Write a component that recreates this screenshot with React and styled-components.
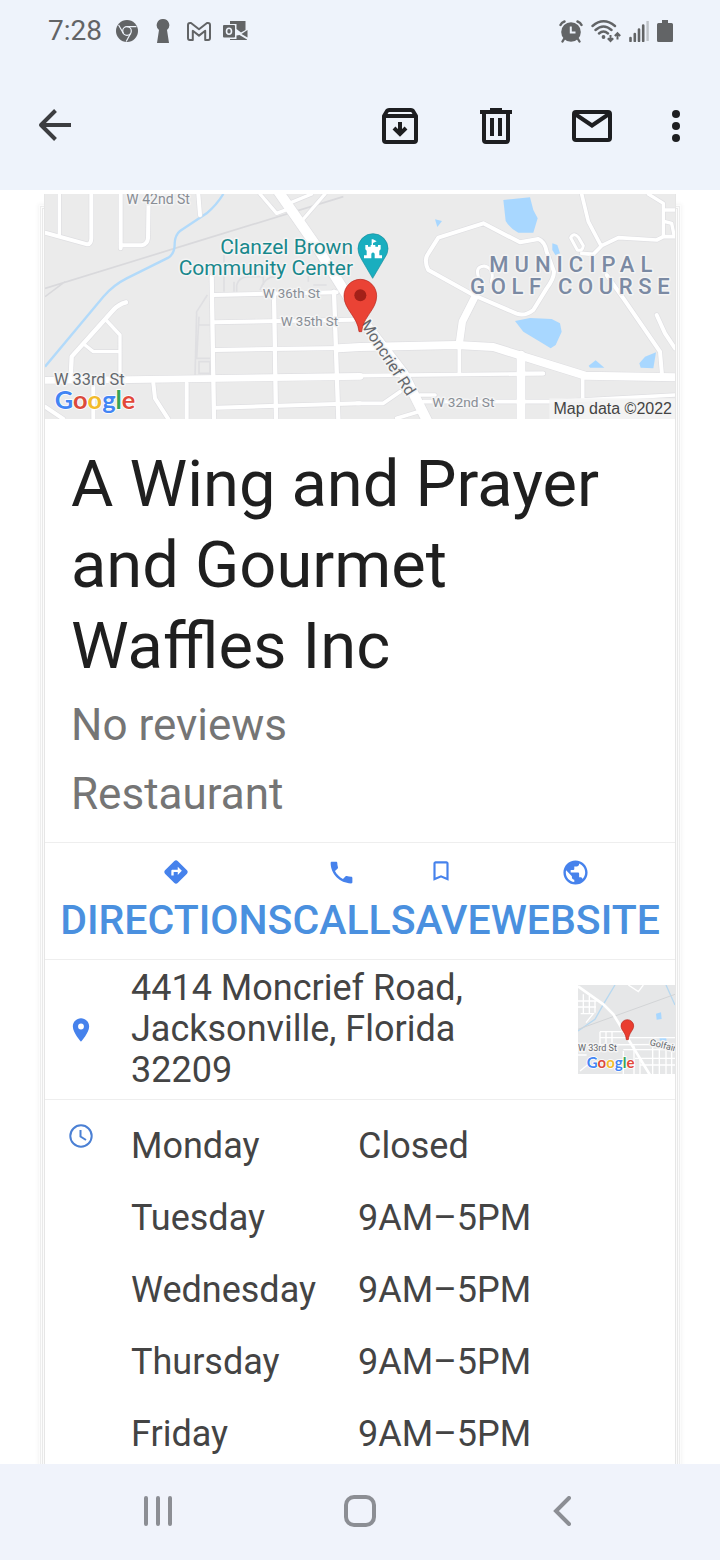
import React from "react";
import styled, { createGlobalStyle } from "styled-components";
import { MdDirections, MdPhone, MdBookmarkBorder, MdPublic, MdPlace } from "react-icons/md";

const GlobalStyle = createGlobalStyle`
  * { box-sizing: border-box; }
  body { margin: 0; background: #fff; font-family: Roboto, "Liberation Sans", sans-serif; }
`;

const Screen = styled.div`
  display: flex;
  flex-direction: column;
  height: 100vh;
  overflow: hidden;
`;

const TopArea = styled.header`
  flex: none;
  background: #eef3fb;
`;

const StatusBar = styled.div`
  display: flex;
  align-items: center;
  justify-content: space-between;
  height: 62px;
  padding: 0 47px 0 48px;
  color: #626466;
`;

const StatusGroup = styled.div`
  display: flex;
  align-items: center;
  gap: ${(p) => p.$gap || 0}px;
  svg { display: block; }
`;

const Clock = styled.time`
  width: 61px;
  font-size: 28px;
  line-height: 32px;
`;

const StatusSlot = styled.span`
  display: flex;
  justify-content: center;
  width: 36px;
`;

const Toolbar = styled.nav`
  display: flex;
  align-items: center;
  height: 128px;
  padding: 0 8px 0 6px;
`;

const Spacer = styled.div`
  flex: 1;
`;

const IconButton = styled.button`
  display: flex;
  align-items: center;
  justify-content: center;
  width: ${(p) => p.$width || 96}px;
  height: 96px;
  padding: 0;
  border: 0;
  background: none;
  color: #1d1e21;
`;

const Content = styled.main`
  flex: 1;
  min-height: 0;
  overflow: hidden;
  padding: 4px 44px 0;
`;

const Card = styled.article`
  min-height: 100%;
  border: solid #e6e6e6;
  border-width: 0 1px;
  background: #fff;
  box-shadow: 0 16px 0 1px #fcfcfc, 0 16px 0 2px #e9e9e9, 0 16px 0 3px #fcfcfc,
    0 16px 0 4px #ededed, 0 16px 0 5px #fcfcfc, 0 16px 4px 6px #f4f4f4;
`;

const MapLink = styled.a`
  display: block;
  svg { display: block; width: 100%; height: auto; }
`;

const Summary = styled.section`
  padding: 25px 26px 13px;
  border-bottom: 1px solid #eee;
`;

const Title = styled.h1`
  margin: 0 0 4px;
  font-size: 65px;
  line-height: 81px;
  font-weight: 400;
  color: #1f1f1f;
`;

const Meta = styled.p`
  margin: 0;
  font-size: 44px;
  line-height: 69px;
  color: #757575;
`;

const Actions = styled.section`
  display: flex;
  justify-content: center;
  padding: 15px 0;
  border-bottom: 1px solid #eee;
`;

const Action = styled.a`
  display: flex;
  flex-direction: column;
  align-items: center;
  gap: 10px;
  padding: 0;
  border: 0;
  background: none;
  color: #4a90df;
  font-family: inherit;
  font-size: 41px;
  line-height: 48px;
  font-weight: 500;
  text-decoration: none;
`;

const ActionIcon = styled.span`
  display: flex;
  justify-content: center;
  align-items: flex-start;
  height: 28px;
  color: #4682ec;
`;

const InfoRow = styled.section`
  display: flex;
  align-items: ${(p) => (p.$top ? "flex-start" : "center")};
  padding: 8px 0;
  border-bottom: ${(p) => (p.$last ? "0" : "1px solid #eee")};
`;

const InfoIcon = styled.span`
  flex: none;
  display: flex;
  justify-content: center;
  width: 72px;
  margin-right: 14px;
  padding-top: ${(p) => p.$offset || 0}px;
  color: #4682ec;
`;

const Address = styled.address`
  flex: 1;
  padding-right: 72px;
  font-style: normal;
  font-size: 36px;
  line-height: 41px;
  color: #444;
`;

const Thumb = styled.a`
  flex: none;
  width: 97px;
  svg { display: block; width: 100%; height: auto; }
`;

const Hours = styled.table`
  margin-top: 2px;
  border-collapse: collapse;
  font-size: 36px;
  line-height: 72px;
  color: #444;
  th, td { padding: 0; font-weight: 400; text-align: left; white-space: nowrap; }
  th { width: 227px; }
`;

const SystemNav = styled.nav`
  flex: none;
  display: flex;
  justify-content: center;
  height: 96px;
  padding-bottom: 2px;
  background: #f0f3fb;
`;

const SystemButton = styled.button`
  display: flex;
  align-items: center;
  justify-content: center;
  width: 28%;
  padding: 0;
  border: 0;
  background: none;
  color: #8c8e94;
`;

const Halo = styled.text`
  font-family: Roboto, sans-serif;
  font-size: ${(p) => p.$size}px;
  font-weight: ${(p) => p.$weight || 400};
  letter-spacing: ${(p) => p.$tracking || 0}px;
  fill: ${(p) => p.$color};
  stroke: #f4f4f4;
  stroke-width: 9px;
  stroke-linejoin: round;
  paint-order: stroke;
`;

const Wordmark = styled.text`
  font-family: Lato, sans-serif;
  font-size: ${(p) => p.$size}px;
  font-weight: 700;
  stroke: #fff;
  stroke-width: 5px;
  paint-order: stroke;
`;

const Credit = styled.text`
  font-family: "Liberation Sans", sans-serif;
  font-size: 48px;
  fill: #444;
`;

function GoogleMark({ x, y, size }) {
  return (
    <Wordmark x={x} y={y} $size={size}>
      <tspan fill="#4285f4">G</tspan>
      <tspan fill="#db4a3c">o</tspan>
      <tspan fill="#f2bb2b">o</tspan>
      <tspan fill="#4285f4">g</tspan>
      <tspan fill="#35a455">l</tspan>
      <tspan fill="#e2483a">e</tspan>
    </Wordmark>
  );
}

const roads = [
  [10, "M88 27V150"],
  [12, "M45 143L172 178Q183 178 184 160V27"],
  [12, "M272 27V190M272 181H335Q352 178 354 160L356 27"],
  [12, "M505 27L510 90"],
  [13, "M288 352Q265 358 250 375L125 515L122 580"],
  [10, "M228 405L270 450V570M165 480L190 500H268"],
  [12, "M370 595L375 640L415 702M470 595V702M190 600V702M45 665L100 702"],
  [20, "M45 586L300 584L990 574"],
  [12, "M550 330L920 322M550 412L970 404M555 495L990 488M560 668L990 655"],
  [13, "M545 275L552 702M732 320L738 702M912 320L925 702"],
  [10, "M690 27L740 85L780 70M885 27L815 108M785 52L845 27"],
  [30, "M742 15L860 185L935 305L1000 410L1120 565L1195 715"],
  [12, "M1330 330L1195 255Q1180 225 1195 205L1225 158L1360 115L1470 172L1525 162Q1545 170 1550 200L1572 260Q1572 280 1550 310L1510 375Q1485 395 1460 386Z"],
  [22, "M1335 335L1297 410L1288 475"],
  [11, "M1288 480V565M1472 565H1540"],
  [9, "M1345 275Q1335 245 1362 243Q1395 250 1384 290"],
  [11, "M1655 27L1675 110L1712 180M1935 155L1900 155L1880 165L1765 158L1715 182L1690 208L1655 205"],
  [9, "M1622 158Q1632 140 1646 158L1660 182Q1658 200 1642 195Z"],
  [10, "M1855 27L1900 55V155M1900 75H1935M1905 110L1925 115L1932 150"],
  [12, "M1730 270L1780 340L1890 500L1896 570M1880 390L1905 445L1935 490"],
  [11, "M980 572L1540 566M1658 580V640M980 655H1060L1110 620M1100 700L1165 680M1170 630H1215M1180 650H1570L1750 640L1935 630"],
  [24, "M925 490L990 486L1280 480L1390 486L1530 530L1665 572L1935 577"],
  [26, "M1473 510V715"],
];

function AreaMap() {
  return (
    <svg viewBox="45 27 1890 675" role="img" aria-label="Map of the area around 4414 Moncrief Road">
      <rect x="45" y="27" width="1890" height="675" fill="#ebebeb" />
      <path d="M45 310L500 170L940 35M45 335L105 290" fill="none" stroke="#d9d9dc" strokeWidth="5" />
      <path
        d="M532 330L500 380L495 575M507 395L500 520H540M505 420H540M507 530H540V565H507ZM582 190V320M612 290V320M620 320V300Q625 280 650 275H700V300M690 315Q705 275 735 275H760M835 240V290M850 300H890"
        fill="none" stroke="#dfdfe2" strokeWidth="5" />
      <path
        d="M45 545L220 335Q250 300 290 280L415 218Q435 205 434 175Q435 150 450 138L530 85Q560 60 580 27"
        fill="none" stroke="#b2dafa" strokeWidth="7" />
      <g fill="#a8d7ff">
        <path d="M1420 45L1500 37L1510 75L1523 100L1510 143H1465Q1440 130 1427 108Z" />
        <path d="M1215 103L1236 108L1222 126Z" />
        <path d="M1567 175L1582 180L1590 205L1576 210L1567 195Z" />
        <path d="M1455 408L1500 399L1565 402L1590 415L1595 440L1577 480L1562 490L1530 470L1480 440Z" />
        <path d="M1676 542L1697 526L1723 548H1680Z" />
        <path d="M1828 535L1845 515L1878 502L1870 550L1832 548Z" />
      </g>
      <g fill="none" stroke="#dfdfe2" strokeLinecap="round" strokeLinejoin="round">
        {roads.map(([w, d]) => <path key={d} d={d} strokeWidth={w + 4} />)}
      </g>
      <g fill="none" stroke="#fff" strokeLinecap="round" strokeLinejoin="round">
        {roads.map(([w, d]) => <path key={d} d={d} strokeWidth={w} />)}
      </g>
      <Halo x="289" y="57" $size={42} $color="#888d94">W 42nd St</Halo>
      <Halo x="969" y="206" textAnchor="end" $size={63} $color="#19888c">Clanzel Brown</Halo>
      <Halo x="969" y="269" textAnchor="end" $size={63} $color="#19888c">Community Center</Halo>
      <Halo x="698" y="340" $size={40} $color="#888d94">W 36th St</Halo>
      <Halo x="752" y="422" $size={40} $color="#888d94">W 35th St</Halo>
      <Halo x="72" y="600" $size={49} $color="#64686d">W 33rd St</Halo>
      <Halo x="1207" y="665" $size={41} $color="#888d94">W 32nd St</Halo>
      <Halo x="1378" y="262" $size={66} $weight={500} $tracking={18} $color="#7b8aa3">MUNICIPAL</Halo>
      <Halo x="1320" y="328" $size={66} $weight={500} $tracking={17} $color="#7b8aa3">GOLF COURSE</Halo>
      <Halo x="0" y="0" transform="translate(990 418) rotate(57)" $size={48} $color="#64686d">Moncrief Rd</Halo>
      <path d="M1028 280L994 222Q984 206 984 191A44 44 0 0 1 1074 191Q1074 206 1062 222Z" fill="#19aebf" stroke="#168c9b" strokeWidth="2" />
      <path d="M1006 180H1014V185H1022V180H1025V163H1029L1040 169L1029 174V180H1036V185H1044V180H1052V193L1048 197V211H1056V220H1034V206Q1029 199 1024 206V220H1002V211H1010V197L1006 193Z" fill="#fff" />
      <path d="M987 440C983 395 942 374 942 333A49 50 0 0 1 1040 333C1040 374 999 395 995 440Z" fill="#ea4335" stroke="#b5251c" strokeWidth="2" />
      <circle cx="991" cy="331" r="18" fill="#a32018" />
      <GoogleMark x={74} y={672} size={76} />
      <rect x="1558" y="640" width="377" height="62" fill="#f5f5f5" fillOpacity="0.85" />
      <Credit x="1926" y="687" textAnchor="end">Map data ©2022</Credit>
    </svg>
  );
}

function ThumbMap() {
  return (
    <svg viewBox="54 42 291 267" role="img" aria-label="Small map of the address">
      <rect x="54" y="42" width="291" height="267" fill="#e6e7e8" />
      <path d="M54 180L105 145L130 100L165 42M318 42L345 102" fill="none" stroke="#b7d8f0" strokeWidth="4" />
      <path d="M54 175L345 70" fill="none" stroke="#d2d4d6" strokeWidth="3" />
      <path d="M288 128L303 124L305 144L290 146ZM298 200L318 198L320 210L300 209Z" fill="#a8d7ff" />
      <g fill="none" stroke="#fff">
        <path d="M54 46L130 100L160 130L202 200L270 312" strokeWidth="8" />
        <path d="M120 182H185M120 200H345M54 222L345 220M190 236H345M54 252H80M225 262H345M240 282H345M60 300L85 280M120 182V220M138 182V220M156 182V220M278 200V309M298 220V309M318 220V309M335 220V309M222 220V309M190 240V309M240 260V309M54 90H110M54 108H108M62 128H100L78 155M70 70V130M88 75V130M105 90V125M205 42L235 62L250 42" strokeWidth="4" />
      </g>
      <Halo x="54" y="241" $size={27} $color="#64686d">W 33rd St</Halo>
      <Halo x="0" y="0" transform="translate(268 222) rotate(14)" $size={27} $color="#64686d">Golfair</Halo>
      <path d="M199 206C197 184 183 178 183 165A19 19 0 0 1 221 165C221 178 207 184 205 206Z" fill="#ea3d2f" stroke="#b5251c" strokeWidth="2" />
      <GoogleMark x={80} y={290} size={45} />
    </svg>
  );
}

const ChromeIcon = () => (
  <svg width="22" height="22" viewBox="0 0 22 22">
    <circle cx="11" cy="11" r="11" fill="currentColor" />
    <g fill="none" stroke="#eef3fb" strokeWidth="1.2">
      <circle cx="11" cy="11" r="4.3" />
      <path d="M11 6.7H20.4M7.3 13.2L2.6 5M14.7 13.2L10.2 21.5" />
    </g>
  </svg>
);

const KeyholeIcon = () => (
  <svg width="14" height="24" viewBox="0 0 14 24">
    <path d="M7 0a6.200 6.200 0 0 1 4 11L13 24H1L3 11A6.200 6.200 0 0 1 7 0Z" fill="currentColor" />
  </svg>
);

const GmailIcon = () => (
  <svg width="24" height="19" viewBox="0 0 24 19">
    <path d="M1 16V3Q1 1 3 1H4L12 7.200 20 1H21Q23 1 23 3V16Q23 18 21.200 18H18.200V8.800L12 13.600 5.800 8.800V18H2.800Q1 18 1 16Z" fill="none" stroke="currentColor" strokeWidth="2" strokeLinejoin="round" />
  </svg>
);

const OutlookIcon = () => (
  <svg width="25" height="20" viewBox="0 0 25 20">
    <path d="M7 0H22.500V9L18 11.500 13.500 8V3H7ZM24.500 9V16.500L18.500 13ZM7 18H13.500V14.500L16.500 14 24 18.500V19H7Z" fill="currentColor" />
    <rect x="0" y="4" width="12" height="12.500" rx="1" fill="currentColor" />
    <ellipse cx="6" cy="10.300" rx="2.500" ry="3" fill="none" stroke="#eef3fb" strokeWidth="1.600" />
  </svg>
);

const AlarmIcon = () => (
  <svg width="24" height="23" viewBox="0 0 24 23">
    <circle cx="12" cy="12" r="9.800" fill="currentColor" />
    <path d="M1.500 5Q2.500 2.500 5.500 1.500M22.500 5Q21.500 2.500 18.500 1.500M5 19L3.500 21.500M19 19L20.500 21.500" fill="none" stroke="currentColor" strokeWidth="2.400" strokeLinecap="round" />
    <path d="M11.800 6.500V12.500H16.500" fill="none" stroke="#eef3fb" strokeWidth="2" />
  </svg>
);

const WifiIcon = () => (
  <svg width="30" height="23" viewBox="0 0 30 23">
    <g fill="none" stroke="currentColor" strokeWidth="2.400" strokeLinecap="round">
      <path d="M1.500 6Q12.500-3.500 24 6M4.500 10Q12.500 3 20.500 10M8 13.500Q12.500 9.500 17 13.500" />
    </g>
    <circle cx="12.500" cy="17" r="1.900" fill="currentColor" />
    <path d="M19.500 15V21M16.800 18.200L19.500 21 22.200 18.200M26.500 19.500V13.500M23.800 16L26.500 13.200 29.200 16" fill="none" stroke="currentColor" strokeWidth="2" />
  </svg>
);

const SignalIcon = () => (
  <svg width="20" height="22" viewBox="0 0 20 22">
    <path d="M1.500 18V21M5.800 14V21M10 9.500V21M14.200 5.500V21" stroke="currentColor" strokeWidth="2.600" strokeLinecap="round" />
    <path d="M18.600 1V21" stroke="#bfc3c9" strokeWidth="2.400" />
  </svg>
);

const BatteryIcon = () => (
  <svg width="16" height="22" viewBox="0 0 16 22">
    <path d="M5 0H11V3H14.500Q16 3 16 4.500V20.500Q16 22 14.500 22H1.500Q0 22 0 20.500V4.500Q0 3 1.500 3H5Z" fill="currentColor" />
  </svg>
);

const BackArrow = () => (
  <svg width="34" height="34" viewBox="0 0 34 34" fill="none" stroke="#3c3d40" strokeWidth="4">
    <path d="M34 16H4M18.500 1.500L4 16 18.500 30.500" strokeLinejoin="round" />
  </svg>
);

const ArchiveIcon = () => (
  <svg width="36" height="36" viewBox="0 0 36 36" fill="none" stroke="currentColor" strokeWidth="4">
    <path d="M2 8L5 3Q5.700 2 7 2H29Q30.300 2 31 3L34 8V32Q34 34 32 34H4Q2 34 2 32ZM2 8H34" strokeLinejoin="round" />
    <path d="M18 14V26M12 20L18 26 24 20" />
  </svg>
);

const TrashIcon = () => (
  <svg width="32" height="36" viewBox="0 0 32 36" fill="none" stroke="currentColor" strokeWidth="4">
    <path d="M0 4H32M10 2H22M4 4V32Q4 34 6 34H26Q28 34 28 32V4M12 10V28M20 10V28" />
  </svg>
);

const MailIcon = () => (
  <svg width="40" height="32" viewBox="0 0 40 32" fill="none" stroke="currentColor" strokeWidth="4">
    <rect x="2" y="2" width="36" height="28" rx="2" />
    <path d="M3 4L20 15.500 37 4" />
  </svg>
);

const MoreIcon = () => (
  <svg width="8" height="32" viewBox="0 0 8 32" fill="currentColor">
    <circle cx="4" cy="4" r="4" />
    <circle cx="4" cy="16" r="4" />
    <circle cx="4" cy="28" r="4" />
  </svg>
);

const ClockIcon = () => (
  <svg width="24" height="24" viewBox="0 0 24 24" fill="none" stroke="#4b80d4" strokeWidth="2">
    <circle cx="12" cy="12" r="10.700" />
    <path d="M11.500 6V12.500L17 16" />
  </svg>
);

const hours = [
  ["Monday", "Closed"],
  ["Tuesday", "9AM–5PM"],
  ["Wednesday", "9AM–5PM"],
  ["Thursday", "9AM–5PM"],
  ["Friday", "9AM–5PM"],
];

const actions = [
  { label: "DIRECTIONS", icon: MdDirections, size: 28, href: "#directions" },
  { label: "CALL", icon: MdPhone, size: 29, href: "#call" },
  { label: "SAVE", icon: MdBookmarkBorder, size: 26 },
  { label: "WEBSITE", icon: MdPublic, size: 29, href: "#website" },
];

export default function App() {
  return (
    <Screen>
      <GlobalStyle />
      <TopArea>
        <StatusBar>
          <StatusGroup>
            <Clock>7:28</Clock>
            <StatusSlot><ChromeIcon /></StatusSlot>
            <StatusSlot><KeyholeIcon /></StatusSlot>
            <StatusSlot><GmailIcon /></StatusSlot>
            <StatusSlot><OutlookIcon /></StatusSlot>
          </StatusGroup>
          <StatusGroup $gap={8}>
            <AlarmIcon />
            <WifiIcon />
            <SignalIcon />
            <BatteryIcon />
          </StatusGroup>
        </StatusBar>
        <Toolbar aria-label="Message">
          <IconButton aria-label="Back"><BackArrow /></IconButton>
          <Spacer />
          <IconButton aria-label="Archive"><ArchiveIcon /></IconButton>
          <IconButton aria-label="Delete"><TrashIcon /></IconButton>
          <IconButton aria-label="Mark as unread"><MailIcon /></IconButton>
          <IconButton aria-label="More options" $width={72}><MoreIcon /></IconButton>
        </Toolbar>
      </TopArea>
      <Content>
        <Card>
          <MapLink href="#map"><AreaMap /></MapLink>
          <Summary>
            <Title>A Wing and Prayer and Gourmet Waffles Inc</Title>
            <Meta>No reviews</Meta>
            <Meta>Restaurant</Meta>
          </Summary>
          <Actions>
            {actions.map(({ label, icon: Icon, size, href }) => (
              <Action key={label} as={href ? "a" : "button"} href={href}>
                <ActionIcon><Icon size={size} /></ActionIcon>
                {label}
              </Action>
            ))}
          </Actions>
          <InfoRow>
            <InfoIcon><MdPlace size={28} /></InfoIcon>
            <Address>4414 Moncrief Road, Jacksonville, Florida 32209</Address>
            <Thumb href="#map"><ThumbMap /></Thumb>
          </InfoRow>
          <InfoRow $top $last>
            <InfoIcon $offset={16}><ClockIcon /></InfoIcon>
            <Hours>
              <tbody>
                {hours.map(([day, time]) => (
                  <tr key={day}>
                    <th scope="row">{day}</th>
                    <td>{time}</td>
                  </tr>
                ))}
              </tbody>
            </Hours>
          </InfoRow>
        </Card>
      </Content>
      <SystemNav aria-label="System">
        <SystemButton aria-label="Recent apps">
          <svg width="28" height="30" viewBox="0 0 28 30" stroke="currentColor" strokeWidth="4" strokeLinecap="round">
            <path d="M2 2V28M14 2V28M26 2V28" />
          </svg>
        </SystemButton>
        <SystemButton aria-label="Home">
          <svg width="32" height="32" viewBox="0 0 32 32" fill="none" stroke="currentColor" strokeWidth="4">
            <rect x="2" y="2" width="28" height="28" rx="8" />
          </svg>
        </SystemButton>
        <SystemButton aria-label="Back">
          <svg width="18" height="30" viewBox="0 0 18 30" fill="none" stroke="currentColor" strokeWidth="4" strokeLinecap="round">
            <path d="M16 2L3 15 16 28" />
          </svg>
        </SystemButton>
      </SystemNav>
    </Screen>
  );
}
